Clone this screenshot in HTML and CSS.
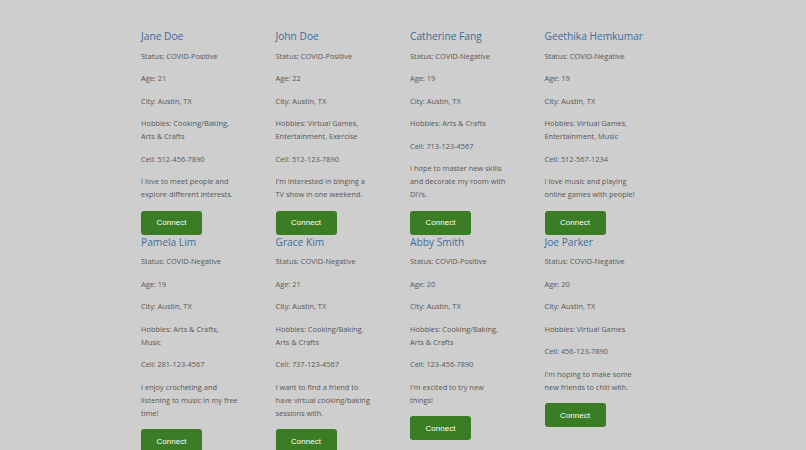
FILE: index.html
```html
<!DOCTYPE html>
<html lang="en">
<head>
    <meta charset="UTF-8">
    <meta name="viewport" content="width=device-width, initial-scale=1.0">
    <title>Find a Friend</title>
    <link rel="stylesheet" href="styles.css">
</head>
<body>

<div class="people-grid">
    <div class="person-card">
        <h3>Jane Doe</h3>
        <p>Status: COVID-Positive</p>
        <p>Age: 21</p>
        <p>City: Austin, TX</p>
        <p>Hobbies: Cooking/Baking, Arts &amp; Crafts</p>
        <p>Cell: 512-456-7890</p>
        <p>I love to meet people and explore different interests.</p>
        <button class="connect-btn">Connect</button>
    </div>

    <div class="person-card">
        <h3>John Doe</h3>
        <p>Status: COVID-Positive</p>
        <p>Age: 22</p>
        <p>City: Austin, TX</p>
        <p>Hobbies: Virtual Games, Entertainment, Exercise</p>
        <p>Cell: 512-123-7890</p>
        <p>I'm interested in binging a TV show in one weekend.</p>
        <button class="connect-btn">Connect</button>
    </div>

    <div class="person-card">
        <h3>Catherine Fang</h3>
        <p>Status: COVID-Negative</p>
        <p>Age: 19</p>
        <p>City: Austin, TX</p>
        <p>Hobbies: Arts &amp; Crafts</p>
        <p>Cell: 713-123-4567</p>
        <p>I hope to master new skills and decorate my room with DIYs.</p>
        <button class="connect-btn">Connect</button>
    </div>

    <div class="person-card">
        <h3>Geethika Hemkumar</h3>
        <p>Status: COVID-Negative</p>
        <p>Age: 19</p>
        <p>City: Austin, TX</p>
        <p>Hobbies: Virtual Games, Entertainment, Music</p>
        <p>Cell: 512-567-1234</p>
        <p>I love music and playing online games with people!</p>
        <button class="connect-btn">Connect</button>
    </div>

    <div class="person-card">
        <h3>Pamela Lim</h3>
        <p>Status: COVID-Negative</p>
        <p>Age: 19</p>
        <p>City: Austin, TX</p>
        <p>Hobbies: Arts &amp; Crafts, Music</p>
        <p>Cell: 281-123-4567</p>
        <p>I enjoy crocheting and listening to music in my free time!</p>
        <button class="connect-btn">Connect</button>
    </div>

    <div class="person-card">
        <h3>Grace Kim</h3>
        <p>Status: COVID-Negative</p>
        <p>Age: 21</p>
        <p>City: Austin, TX</p>
        <p>Hobbies: Cooking/Baking, Arts &amp; Crafts</p>
        <p>Cell: 737-123-4567</p>
        <p>I want to find a friend to have virtual cooking/baking sessions with.</p>
        <button class="connect-btn">Connect</button>
    </div>

    <div class="person-card">
        <h3>Abby Smith</h3>
        <p>Status: COVID-Positive</p>
        <p>Age: 20</p>
        <p>City: Austin, TX</p>
        <p>Hobbies: Cooking/Baking, Arts &amp; Crafts</p>
        <p>Cell: 123-456-7890</p>
        <p>I'm excited to try new things!</p>
        <button class="connect-btn">Connect</button>
    </div>

    <div class="person-card">
        <h3>Joe Parker</h3>
        <p>Status: COVID-Negative</p>
        <p>Age: 20</p>
        <p>City: Austin, TX</p>
        <p>Hobbies: Virtual Games</p>
        <p>Cell: 456-123-7890</p>
        <p>I'm hoping to make some new friends to chill with.</p>
        <button class="connect-btn">Connect</button>
    </div>
</div>

</body>
</html>
```

FILE: styles.css
```css
/* Base Styles */
:root {
    --bg-color: #cecece;
    --text-color: #575757;
    --name-color: #3d6c9b;
    --button-bg: #3a7d24;
    --button-text: #ffffff;
}

body {
    margin: 0;
    font-family: "Open Sans", sans-serif;
    background-color: var(--bg-color);
    color: var(--text-color);
    height: 100vh;
    overflow: hidden;
}

/* Cards grid */
.people-grid {
    display: grid;
    grid-template-columns: repeat(4, 134.5px);
    padding: 29px 0 0 141px;
}

.person-card {
    width: 98px;
}

.person-card h3 {
    font-size: 10.2px;
    font-weight: normal;
    line-height: 14px;
    color: var(--name-color);
    margin: 0 0 6.5px;
    white-space: nowrap;
}

.person-card p {
    font-size: 7.4px;
    line-height: 13px;
    margin: 0 0 9.5px;
}

.connect-btn {
    display: block;
    width: 61px;
    height: 24px;
    padding: 0;
    border: none;
    border-radius: 3px;
    background-color: var(--button-bg);
    color: var(--button-text);
    font-family: "Liberation Sans", Arial, sans-serif;
    font-size: 8px;
    cursor: pointer;
}
```
